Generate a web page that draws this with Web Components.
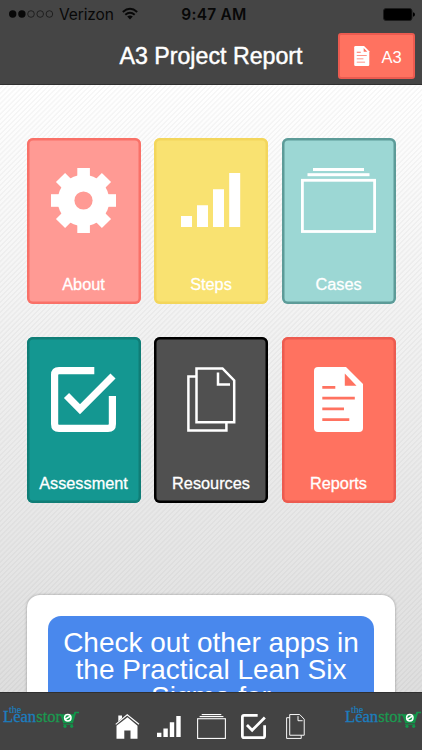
<!DOCTYPE html>
<html lang="en"><head><meta charset="utf-8"><title>A3 Project Report</title>
<style>
html,body{margin:0;height:100%;overflow:hidden}
body{font-family:"Liberation Sans",Arial,sans-serif}
</style></head><body>
<a3-app></a3-app>
<script>
const ICONS = {
  gear: `<svg viewBox="0 0 65 65"><g fill="#fff"><rect x="26.3" y="0" width="12.6" height="65"/><rect x="0" y="26.2" width="65" height="12.6"/><g transform="rotate(45 32.5 32.5)"><rect x="26" y="0" width="13" height="65"/><rect x="0" y="26" width="65" height="13"/></g></g><circle cx="32.5" cy="32.5" r="25.8" fill="#fff"/><circle cx="32.5" cy="32.5" r="9.1" fill="var(--tile)"/></svg>`,
  bars: `<svg viewBox="0 0 60 54" preserveAspectRatio="none"><path fill="#fff" d="M0 43h11v11H0zM16 32.300h11V54H16zM32 16.300h11V54H32zM48.200 0h11V54h-11z"/></svg>`,
  folders: `<svg viewBox="0 0 75 65"><g fill="#fff"><rect x="12" y="0" width="51" height="3"/><rect x="6.500" y="5.200" width="62" height="3"/></g><rect x="1.400" y="12.300" width="72.200" height="51.200" fill="none" stroke="#fff" stroke-width="2.800"/></svg>`,
  check: `<svg viewBox="0 0 65 65"><path d="M43.300 3.600H8Q3.600 3.600 3.600 8V57Q3.600 61.400 8 61.400H57Q61.400 61.400 61.400 57V29M15.500 28.500 29 42.200 62 9" fill="none" stroke="#fff" stroke-width="7.200"/></svg>`,
  pages: `<svg viewBox="0 0 49 65" fill="none" stroke="#fff" stroke-width="2.500"><path d="M9.500 1.400H35.500L47.200 13.500V55.200H9.500ZM9.500 9.600H1.400V63.500H39.400V55.200M31 5.500V17.500H43"/></svg>`,
  report: `<svg viewBox="0 0 49 65"><path fill="#fff" d="M4 0H32L49 17V61Q49 65 45 65H4Q0 65 0 61V4Q0 0 4 0Z"/><path fill="var(--tile)" d="M30.800 6.500V18.700H42.500ZM8.300 19h13v2.700h-13zM8.300 29.800h32.500v2.700H8.300zM8.300 40.600h21.700v2.700H8.300zM8.300 51.300h27v2.700h-27z"/></svg>`,
  home: `<svg viewBox="0 0 25 25"><path fill="#fff" d="M12.500 3.200 22.500 11.700V24.700H15.500V16.500H9.300V24.700H1.500V11.700ZM3.300 1.500H7V4.300L3.300 7.400Z"/><path d="M.7 10.300 12.200.8 24 10.300" fill="none" stroke="#fff" stroke-width="1.100"/></svg>`
};
function define(name, css, html){
  customElements.define(name, class extends HTMLElement{
    connectedCallback(){
      if(this.shadowRoot) return;
      const t=document.createElement('template');
      t.innerHTML=`<style>svg{display:block;width:100%;height:100%;overflow:visible}${css}</style>${typeof html==='function'?html(this):html}`;
      this.attachShadow({mode:'open'}).append(t.content.cloneNode(true));
    }
  });
}
define('ui-icon',':host{display:block;flex:none}',el=>ICONS[el.getAttribute('name')]);
define('status-bar',`
:host{display:grid;grid-template-columns:1fr auto 1fr;height:27px;align-items:center;padding:1px 7px 0 9px;box-sizing:border-box;font-family:Inter,sans-serif;font-size:15.500px;color:#080808}
.l{display:flex;align-items:center}.dots{width:45px;height:8px}.v{margin-left:5px;letter-spacing:-.1px;width:56px}.wifi{width:16px;height:12px;margin-left:7px}
.t{font-weight:600;font-size:15.500px;letter-spacing:.25px;margin-left:4px}.b{width:32px;height:13px;justify-self:end}`,
`<div class="l"><div class="dots"><svg viewBox="0 0 45 8"><g fill="#080808"><circle cx="3.700" cy="4" r="3.700"/><circle cx="12.900" cy="4" r="3.700"/></g><g fill="none" stroke="#151515" stroke-width=".8"><circle cx="22" cy="4" r="3.300"/><circle cx="31.200" cy="4" r="3.300"/><circle cx="40.400" cy="4" r="3.300"/></g></svg></div><span class="v">Verizon</span><div class="wifi"><svg viewBox="0 0 16 12"><g fill="none" stroke="#080808" stroke-width="1.900"><path d="M.8 4Q8-2.300 15.200 4M3.300 6.800Q8 2.600 12.700 6.800"/></g><path fill="#080808" d="M5.200 8.600Q8 6.300 10.800 8.600L8 11.500Z"/></svg></div></div><span class="t">9:47 AM</span><div class="b"><svg viewBox="0 0 32 13"><rect x=".5" y=".5" width="28.500" height="12" rx="2.500" fill="#000" stroke="#1d1d1d"/><path fill="#000" d="M30 4.300Q32 4.500 32 6.500T30 8.700Z"/></svg></div>`);
define('a3-button',`:host{--tile:#ff7260;display:flex;box-sizing:border-box;width:77px;height:46px;border:2px solid #ec5b50;border-radius:3px;background:#ff7260;align-items:center;padding:1px 0 0 13.500px;color:#fff;font-size:16.500px}ui-icon{width:15.500px;height:20px;margin-right:12.500px}span{padding-top:2px}`,`<ui-icon name="report"></ui-icon><span><slot></slot></span>`);
define('top-bar',`:host{display:block;height:84.500px;box-sizing:border-box;background:#454545;border-bottom:1.500px solid #303030;color:#fff}
.r{display:grid;grid-template-columns:1fr auto 1fr;align-items:center;height:58px;padding:0 7px 1px 7px;box-sizing:border-box}h1{grid-column:2;margin:0;padding-top:2px;font-size:23.200px;font-weight:400;-webkit-text-stroke:.45px #fff;white-space:nowrap}a3-button{justify-self:end}`,
`<status-bar></status-bar><div class="r"><h1><slot></slot></h1><a3-button>A3</a3-button></div>`);
define('menu-tile',`:host{display:flex;flex-direction:column;align-items:center;justify-content:space-between;box-sizing:border-box;height:166px;box-shadow:inset 0 0 0 2.500px var(--edge);border-radius:6px;background:var(--tile);color:#fff;font-size:16.300px;padding:30px 0 10px}
.i{height:65px;display:flex;align-items:center}span{line-height:20px;-webkit-text-stroke:.3px #fff}
ui-icon{width:var(--w,65px);height:var(--h,65px)}`,
el=>`<div class="i"><ui-icon name="${el.getAttribute('icon')}"></ui-icon></div><span><slot></slot></span>`);
define('promo-card',`:host{display:block;margin:0 27px;height:140px;box-sizing:border-box;padding:21px 21px 0;background:#fff;border-radius:13px;box-shadow:0 0 3px #0005}
div{background:#4988ed;border-radius:13px;height:130px;box-sizing:border-box;padding:13px 5px;color:#fff;text-align:center;font-size:28px;line-height:27px}`,`<div><slot></slot></div>`);
define('store-logo',`:host{display:flex;width:76px;height:22px;position:relative;font-family:"Liberation Serif",serif;font-size:16.600px;line-height:22px;color:#1b9950}
b{font-weight:400;color:#1c7dbe}.n{-webkit-text-stroke:.3px currentColor;white-space:nowrap}
.the{position:absolute;left:6px;top:-1px;font-size:10px;line-height:9px;color:#1c7dbe;-webkit-text-stroke:.2px #1c7dbe}.c{flex:none;width:19px;height:18px;margin:4.500px 0 0 -1px}`,
`<span class="n"><b>Lean</b>stor</span><span class="the">the</span><div class="c"><svg viewBox="0 0 19 18"><path fill="#12964a" d="M0 3.200H13.500L14.500.8H19V2.200H16L13 12H3.200Z"/><path stroke="#12964a" d="M3 13.200H13"/><circle cx="5" cy="15.300" r="1.600" fill="#12964a"/><circle cx="11.700" cy="15.300" r="1.600" fill="#12964a"/><g fill="none" stroke="#fff" stroke-width="1.500"><circle cx="7.800" cy="6.800" r="3.200"/><path d="M5 8.500 10.500 5"/></g></svg></div>`);
define('tab-bar',`:host{display:grid;grid-template-columns:76px auto 76px;justify-content:space-between;height:58px;box-sizing:border-box;background:#434343;border-top:1px solid #303030;padding:13px 1px 0 3px}
nav{display:flex;align-items:center;padding:8px 5px 0 0;height:25px}
.h{width:25px;height:25px;margin-right:17.500px}.b{width:24px;height:21px;margin-right:15.500px}.f{width:29px;height:25px;margin-right:15px}.c{width:25px;height:25px;margin-right:20px}.p{width:19px;height:25px}`,
`<store-logo></store-logo><nav><ui-icon class="h" name="home"></ui-icon><ui-icon class="b" name="bars"></ui-icon><ui-icon class="f" name="folders"></ui-icon><ui-icon class="c" name="check"></ui-icon><ui-icon class="p" name="pages"></ui-icon></nav><store-logo></store-logo>`);
define('a3-app',`:host{display:grid;grid-template-rows:84.500px 1fr 58px;height:750px;width:422px;overflow:hidden}
main{overflow:hidden;background:repeating-linear-gradient(135deg,#0000 0 1.700px,#00000008 2.100px 3.200px,#0000 3.600px),linear-gradient(#fff,#dedede)}
.g{display:grid;grid-template-columns:repeat(3,114px);column-gap:13.500px;row-gap:33.300px;padding:53px 0 92px 26.500px}`,
`<top-bar>A3 Project Report</top-bar><main><div class="g">
<menu-tile icon="gear" style="--tile:#ff9a94;--edge:#f97168">About</menu-tile>
<menu-tile icon="bars" style="--tile:#f9e271;--edge:#f3d65c;--w:60px;--h:54px">Steps</menu-tile>
<menu-tile icon="folders" style="--tile:#9cd7d4;--edge:#5d9b98;--w:75px">Cases</menu-tile>
<menu-tile icon="check" style="--tile:#149791;--edge:#107d76">Assessment</menu-tile>
<menu-tile icon="pages" style="--tile:#505050;--edge:#000;--w:49px">Resources</menu-tile>
<menu-tile icon="report" style="--tile:#ff7260;--edge:#ec5b50;--w:49px">Reports</menu-tile></div>
<promo-card>Check out other apps in<br>the Practical Lean Six<br>Sigma for</promo-card></main><tab-bar></tab-bar>`);
</script></body></html>
